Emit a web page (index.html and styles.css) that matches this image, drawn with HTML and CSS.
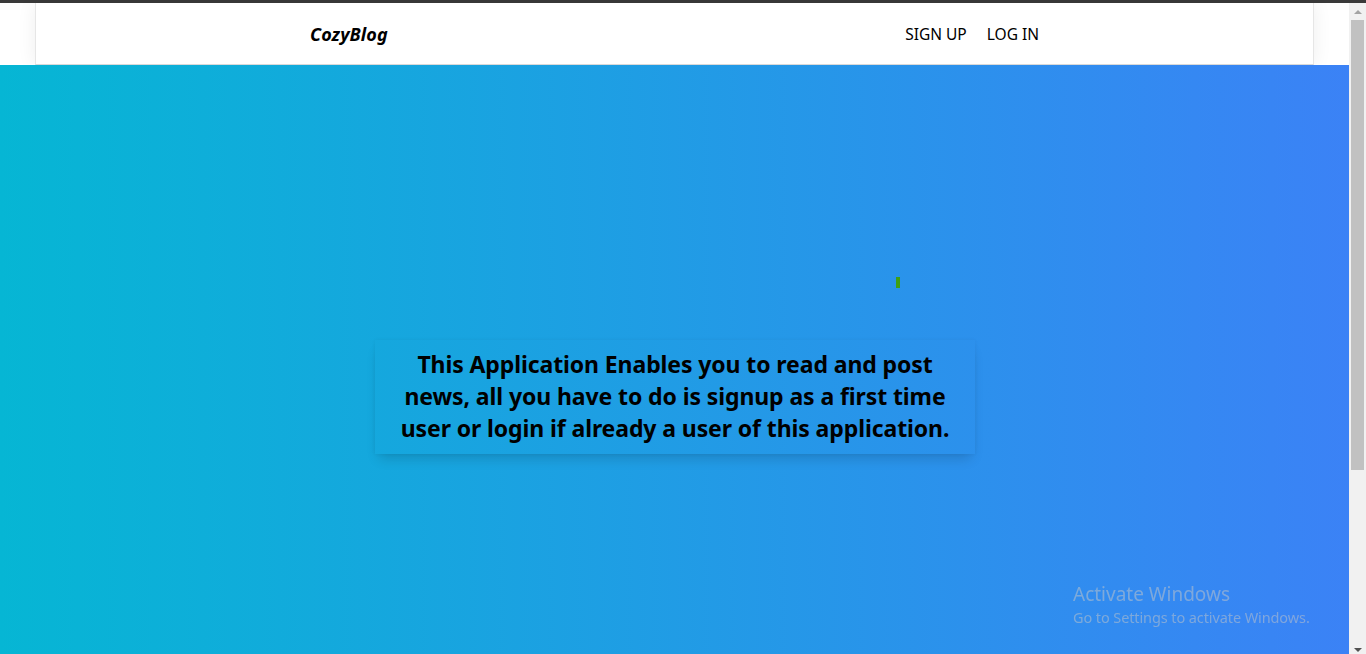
FILE: index.html
```html
<!DOCTYPE html>
<html lang="en">
<head>
<meta charset="utf-8">
<title>CozyBlog</title>
<link rel="stylesheet" href="styles.css">
</head>
<body>
<div class="topbar"></div>
<div class="window">
  <div class="page">
    <header class="header">
      <nav class="nav">
        <div class="nav-inner">
          <a class="brand" href="#">CozyBlog</a>
          <div class="links">
            <a href="#">SIGN UP</a>
            <a href="#">LOG IN</a>
          </div>
        </div>
      </nav>
    </header>
    <main class="hero">
      <div class="marker"></div>
      <div class="card">
        <p>This Application Enables you to read and post<br>news, all you have to do is signup as a first time<br>user or login if already a user of this application.</p>
      </div>
    </main>
  </div>
  <div class="scrollbar">
    <div class="arrow up"></div>
    <div class="thumb"></div>
    <div class="track-rest"></div>
    <div class="arrow down"></div>
  </div>
</div>
<div class="activate">
  <div class="act-title">Activate Windows</div>
  <div class="act-sub">Go to Settings to activate Windows.</div>
</div>
</body>
</html>
```

FILE: styles.css
```css
* { box-sizing: border-box; }
html, body { margin: 0; padding: 0; height: 100%; }
body {
  display: flex;
  flex-direction: column;
  overflow: hidden;
  font-family: "Noto Sans", "Open Sans", sans-serif;
  background: #fff;
}
.topbar { height: 3px; background: #3a3a3a; flex: none; }
.window { flex: 1; display: flex; min-height: 0; }
.page { flex: 1; display: flex; flex-direction: column; min-width: 0; }
.header { background: #fff; padding: 0 35px; flex: none; }
.nav {
  height: 62px;
  background: #fff;
  border-left: 1px solid #e6e6e6;
  border-right: 1px solid #e6e6e6;
  border-bottom: 1px solid #d9d9d9;
  box-shadow: 0 0 18px rgba(0,0,0,0.07);
  display: flex;
  align-items: center;
}
.nav-inner {
  width: 729px;
  margin: 0 auto;
  display: flex;
  justify-content: space-between;
  align-items: center;
}
.brand {
  font-weight: 700;
  font-style: italic;
  font-size: 18px;
  color: #000;
  text-decoration: none;
  letter-spacing: 0.1px;
}
.links { display: flex; gap: 20px; }
.links a {
  color: #000;
  text-decoration: none;
  font-size: 15.5px;
  letter-spacing: 0;
}
.hero {
  flex: 1;
  background: linear-gradient(to right, #06b6d4, #3b82f6);
  padding-top: 212px;
}
.marker {
  width: 4px;
  height: 11px;
  margin-left: 896px;
  background: #3f9f14;
}
.card {
  width: 600px;
  margin: 52px 0 0 375px;
  padding: 8px 0 10px;
  box-shadow: 0 8px 12px -4px rgba(0,0,0,0.16), 0 0 4px rgba(0,0,0,0.05);
  text-align: center;
}
.card p {
  margin: 0;
  font-weight: 700;
  font-size: 23px;
  line-height: 32px;
  letter-spacing: -0.1px;
  color: #000;
}
.scrollbar {
  width: 17px;
  flex: none;
  background: #f1f1f1;
  display: flex;
  flex-direction: column;
  align-items: center;
}
.arrow { width: 0; height: 0; border-left: 4px solid transparent; border-right: 4px solid transparent; flex: none; }
.arrow.up { border-bottom: 4px solid #a3a3a3; margin: 7px 0 6px; }
.thumb { width: 13px; height: 450px; background: #c1c1c1; flex: none; }
.track-rest { flex: 1; }
.arrow.down { border-top: 4px solid #505050; margin: 0 0 2px; }
.activate {
  position: fixed;
  left: 1073px;
  top: 582px;
  font-family: "Noto Sans", "Open Sans", sans-serif;
  color: rgba(200, 200, 200, 0.5);
}
.act-title { font-size: 19px; line-height: 24px; letter-spacing: 0; }
.act-sub { font-size: 14.5px; line-height: 22px; letter-spacing: -0.1px; }
```
